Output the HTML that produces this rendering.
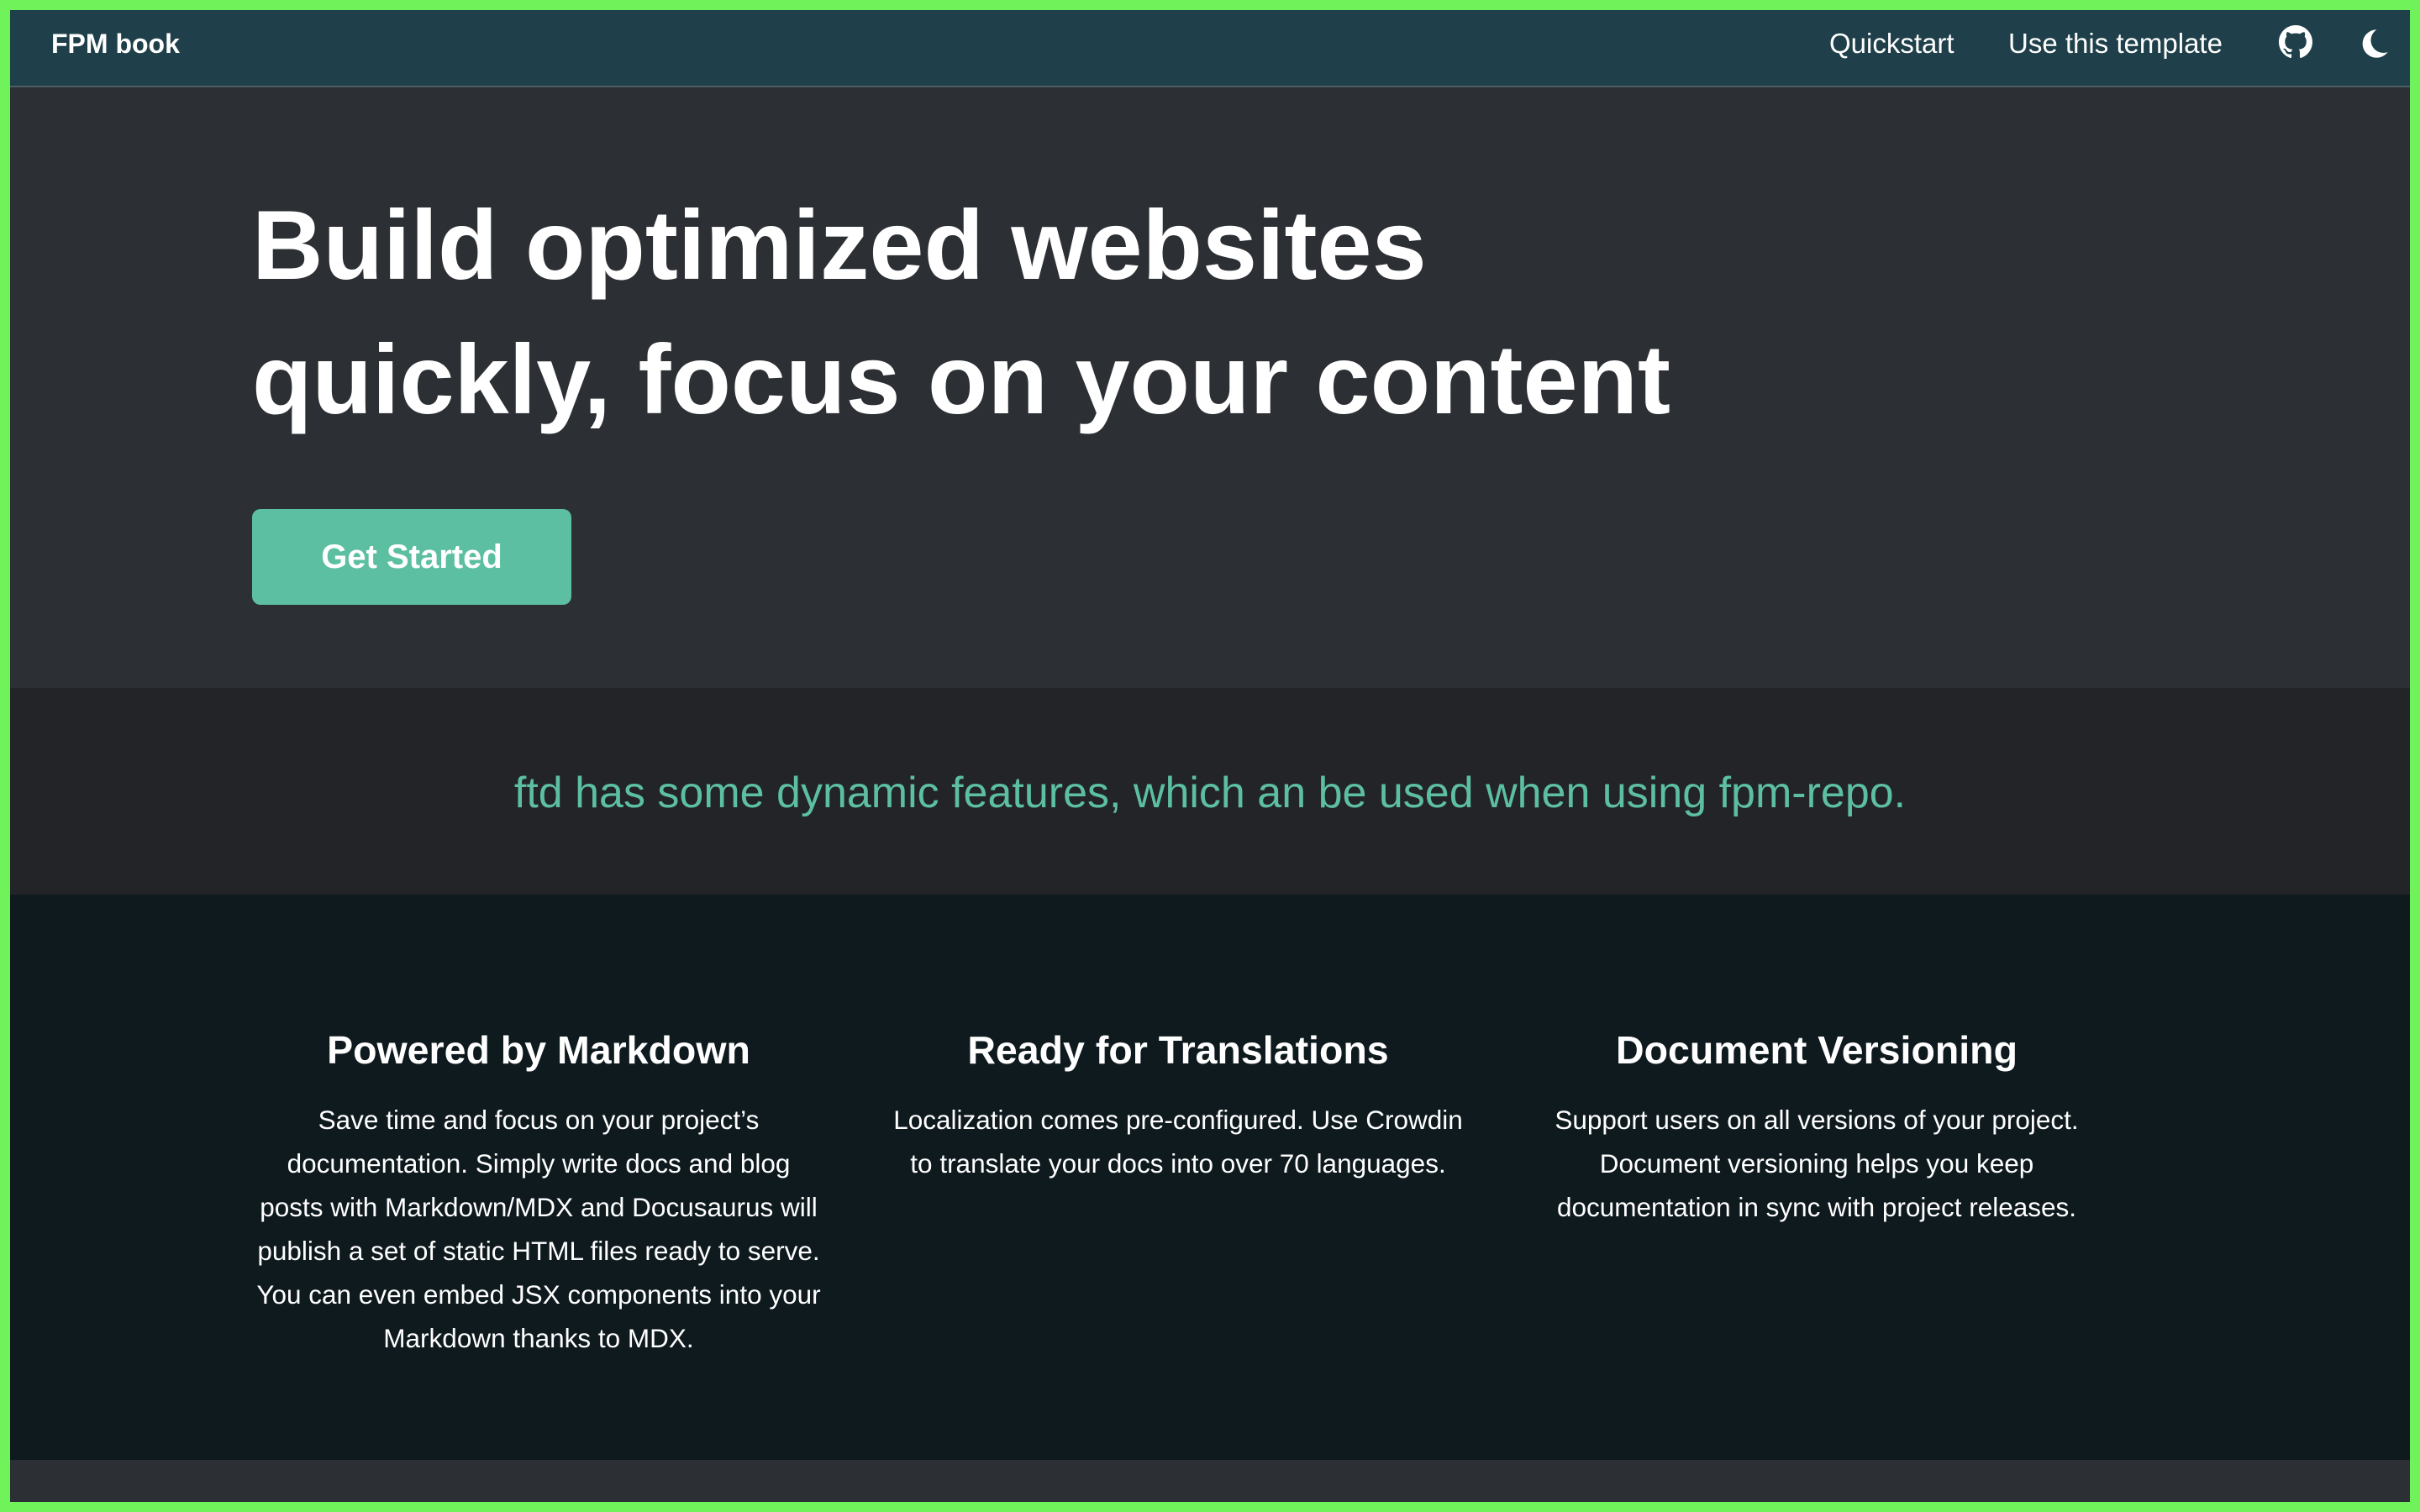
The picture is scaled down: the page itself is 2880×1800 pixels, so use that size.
<!DOCTYPE html>
<html><head><meta charset="utf-8"><style>
*{margin:0;padding:0;box-sizing:border-box}
html,body{width:2880px;height:1800px;overflow:hidden;background:#6ff25a;font-family:"Liberation Sans",sans-serif;color:#fff}
.frame{position:absolute;left:12px;top:12px;width:2856px;height:1776px;background:#2c3035;overflow:hidden}
.nav{position:absolute;left:0;top:0;width:100%;height:92px;background:#1f404a;border-bottom:2px solid #4c5d63}
.brand{position:absolute;left:49px;top:22px;font-size:32px;font-weight:bold}
.nl{position:absolute;top:21px;font-size:33px}
.hero{position:absolute;left:0;top:94px;width:100%;height:713px;background:#2c2f34}
h1{position:absolute;left:288px;top:106px;font-size:117px;line-height:160px;font-weight:bold;white-space:nowrap}
.btn{position:absolute;left:288px;top:500px;width:380px;height:114px;background:#5dbfa1;border-radius:10px;font-size:40px;font-weight:bold;text-align:center;line-height:114px}
.band{position:absolute;left:0;top:807px;width:100%;height:246px;background:#232428;color:#5dbfa1;font-size:52px;text-align:center;line-height:250px}
.feat{position:absolute;left:0;top:1053px;width:100%;height:673px;background:#0f1a1f}
.col{position:absolute;top:158px;width:720px;text-align:center;white-space:nowrap}
.col h3{font-size:46.5px;font-weight:bold;height:84px}
.col p{font-size:31.5px;line-height:52px}
</style></head><body><div class="frame">
<div class="nav">
<div class="brand">FPM book</div>
<div class="nl" style="left:2165px">Quickstart</div>
<div class="nl" style="left:2378px">Use this template</div>
<svg style="position:absolute;left:2700px;top:18px" width="40" height="40" viewBox="0 0 16 16"><path fill="#fff" d="M8 0C3.580 0 0 3.58 0 8c0 3.54 2.29 6.53 5.47 7.590.4.07.55-.17.55-.38 0-.19-.01-.82-.01-1.49-2.010.37-2.53-.49-2.69-.94-.09-.23-.48-.94-.82-1.13-.28-.15-.68-.52-.01-.53.63-.01 1.08.58 1.23.82.72 1.21 1.87.87 2.33.66.07-.52.28-.87.51-1.07-1.78-.2-3.64-.89-3.64-3.95 0-.87.31-1.59.82-2.15-.08-.2-.36-1.02.08-2.12 0 0 .67-.21 2.2.82.64-.18 1.32-.27 2-.27.68 0 1.36.09 2 .27 1.53-1.04 2.2-.82 2.2-.82.44 1.1.16 1.92.08 2.12.51.56.82 1.27.82 2.15 0 3.07-1.87 3.75-3.65 3.95.29.25.54.73.54 1.48 0 1.07-.01 1.93-.01 2.2 0 .21.15.46.55.38A8.013 8.013 0 0016 8c0-4.42-3.58-8-8-8z"/></svg>
<svg style="position:absolute;left:2793px;top:20px" width="40" height="40" viewBox="0 0 24 24"><path fill="#fff" d="M14 2A10 10 0 1 0 22 18 9 9 0 0 1 14 2z"/></svg>
</div>
<div class="hero">
<h1>Build optimized websites<br>quickly, focus on your content</h1>
<div class="btn">Get Started</div>
</div>
<div class="band">ftd has some dynamic features, which an be used when using fpm-repo.</div>
<div class="feat">
<div class="col" style="left:269px"><h3>Powered by Markdown</h3><p>Save time and focus on your project’s<br>documentation. Simply write docs and blog<br>posts with Markdown/MDX and Docusaurus will<br>publish a set of static HTML files ready to serve.<br>You can even embed JSX components into your<br>Markdown thanks to MDX.</p></div>
<div class="col" style="left:1030px"><h3>Ready for Translations</h3><p>Localization comes pre-configured. Use Crowdin<br>to translate your docs into over 70 languages.</p></div>
<div class="col" style="left:1790px"><h3>Document Versioning</h3><p>Support users on all versions of your project.<br>Document versioning helps you keep<br>documentation in sync with project releases.</p></div>
</div>
</div></body></html>
